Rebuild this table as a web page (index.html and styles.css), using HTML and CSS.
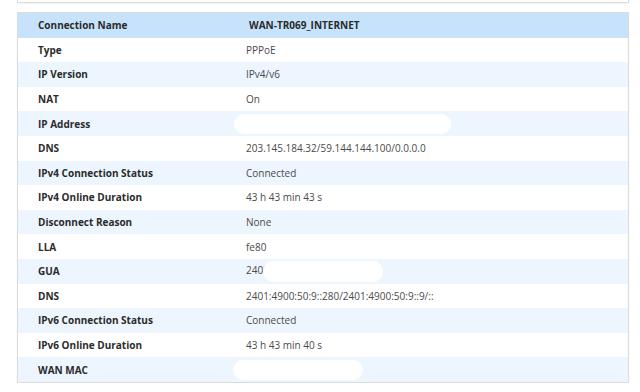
FILE: index.html
```html
<!DOCTYPE html>
<html>
<head>
<meta charset="utf-8">
<link rel="stylesheet" href="styles.css">
</head>
<body>
<div class="page">
  <div class="top-card"></div>
  <div class="info-table">
    <div class="row head"><div class="label">Connection Name</div><div class="value">WAN-TR069_INTERNET</div></div>
    <div class="row"><div class="label">Type</div><div class="value">PPPoE</div></div>
    <div class="row alt"><div class="label">IP Version</div><div class="value">IPv4/v6</div></div>
    <div class="row"><div class="label">NAT</div><div class="value">On</div></div>
    <div class="row alt"><div class="label">IP Address</div><div class="value"><span class="mask mask-ip"></span></div></div>
    <div class="row"><div class="label">DNS</div><div class="value">203.145.184.32/59.144.144.100/0.0.0.0</div></div>
    <div class="row alt"><div class="label">IPv4 Connection Status</div><div class="value">Connected</div></div>
    <div class="row"><div class="label">IPv4 Online Duration</div><div class="value">43 h 43 min 43 s</div></div>
    <div class="row alt"><div class="label">Disconnect Reason</div><div class="value">None</div></div>
    <div class="row"><div class="label">LLA</div><div class="value">fe80</div></div>
    <div class="row alt"><div class="label">GUA</div><div class="value">240'<span class="mask mask-gua"></span></div></div>
    <div class="row"><div class="label">DNS</div><div class="value">2401:4900:50:9::280/2401:4900:50:9::9/::</div></div>
    <div class="row alt"><div class="label">IPv6 Connection Status</div><div class="value">Connected</div></div>
    <div class="row"><div class="label">IPv6 Online Duration</div><div class="value">43 h 43 min 40 s</div></div>
    <div class="row alt"><div class="label">WAN MAC</div><div class="value"><span class="mask mask-mac"></span></div></div>
  </div>
</div>
</body>
</html>
```
FILE: styles.css
```css
html, body {
  margin: 0;
  padding: 0;
  background: #ffffff;
}
body {
  font-family: "Open Sans", "Noto Sans", sans-serif;
  font-size: 10px;
  color: #444;
}
.page {
  width: 612px;
  padding-left: 17px;
}
.top-card {
  height: 2px;
  border: 1px solid #dcdcdc;
  border-top: none;
  box-shadow: 0 1px 2px rgba(0,0,0,0.06);
}
.info-table {
  margin-top: 9px;
  border: 1px solid #dcdcdc;
  box-shadow: 0 1px 2px rgba(0,0,0,0.05);
}
.row {
  display: grid;
  grid-template-columns: 228px 1fr;
  align-items: center;
  height: 24.6px;
  background: #ffffff;
}
.row.alt {
  background: #edf6fe;
}
.row.head {
  background: #c6e3fb;
}
.label {
  padding-left: 20px;
  font-weight: 700;
  color: #2b2b2b;
}
.value {
  color: #4a4a4a;
  white-space: nowrap;
}
.head .value {
  padding-left: 3px;
  font-weight: 700;
  color: #2b2b2b;
}
.mask {
  display: inline-block;
  vertical-align: middle;
  background: #ffffff;
  border-radius: 10px;
}
.mask-ip {
  width: 217px;
  height: 20px;
  margin-left: -12px;
}
.mask-gua {
  width: 120px;
  height: 21px;
  margin-left: -2px;
}
.mask-mac {
  width: 130px;
  height: 20px;
  margin-left: -13px;
}
```
